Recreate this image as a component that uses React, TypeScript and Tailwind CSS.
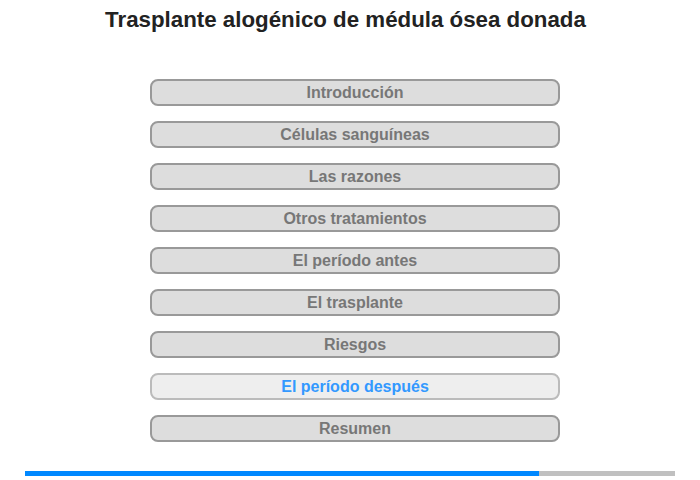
import React from "react";

const items = [
  "Introducción",
  "Células sanguíneas",
  "Las razones",
  "Otros tratamientos",
  "El período antes",
  "El trasplante",
  "Riesgos",
  "El período después",
  "Resumen",
];

export default function App() {
  return (
    <div className="w-[700px] h-[480px] bg-white flex flex-col items-center" style={{ fontFamily: '"Liberation Sans", Arial, sans-serif' }}>
      <h1 className="mt-[7px] mr-[9px] text-[22.3px] leading-[26px] font-bold text-[#222222] whitespace-nowrap">
        Trasplante alogénico de médula ósea donada
      </h1>
      <div className="mt-[46px] ml-[10px] flex flex-col gap-[15px] w-[410px]">
        {items.map((t, i) => {
          const active = i === 7;
          return (
            <div
              key={t}
              className={
                active
                  ? "h-[27px] rounded-[8px] border-2 border-[#bbbbbb] bg-[#eeeeee] flex items-center justify-center text-[16px] font-bold text-[#3399ff]"
                  : "h-[27px] rounded-[8px] border-2 border-[#999999] bg-[#dddddd] flex items-center justify-center text-[16px] font-bold text-[#777777]"
              }
            >
              {t}
            </div>
          );
        })}
      </div>
      <div className="mt-[29px] w-[650px] h-[5px] bg-[#c0c0c0] flex">
        <div className="h-full bg-[#0088ff]" style={{ width: "514px" }} />
      </div>
    </div>
  );
}
